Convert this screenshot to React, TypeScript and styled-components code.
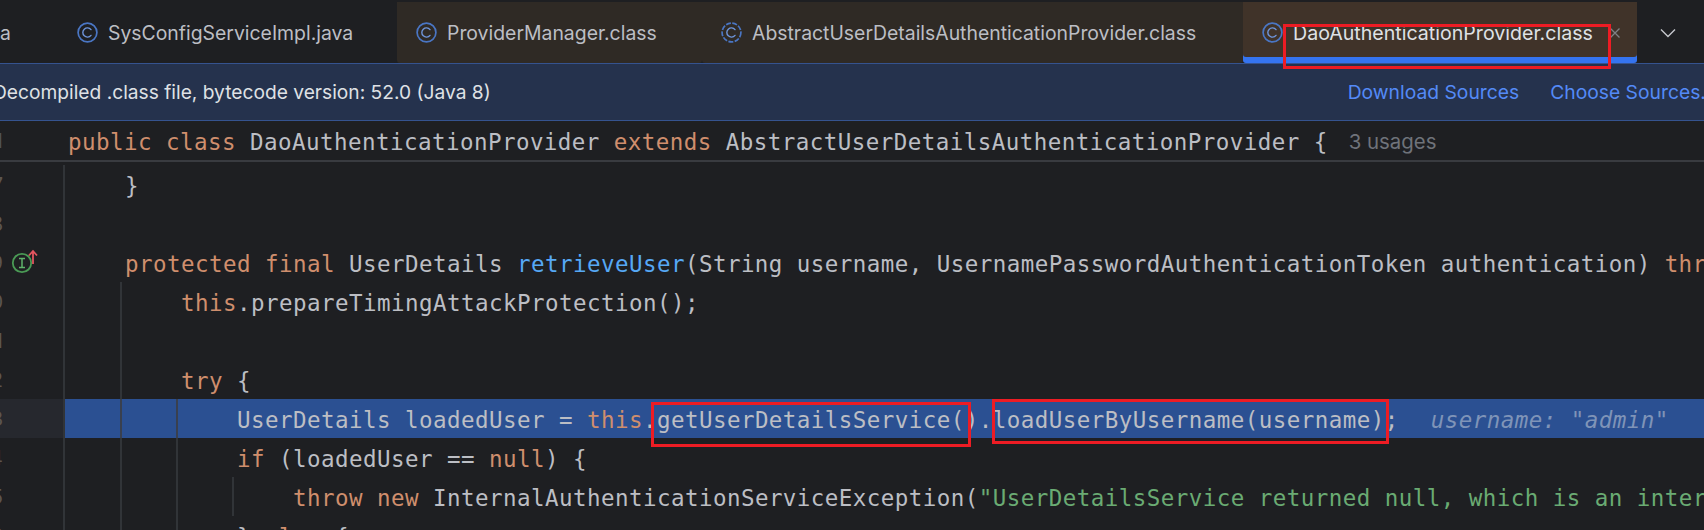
import styled, { createGlobalStyle } from "styled-components";

const GlobalStyle = createGlobalStyle`
  html, body {
    margin: 0;
    padding: 0;
    background: #1e1f22;
  }
`;

const tones = {
  plain: "#bcbec4",
  keyword: "#cf8e6d",
  method: "#56a8f5",
  string: "#6aab73",
  hint: "#7f94b8",
};

type Tone = keyof typeof tones;

function ClassIcon({ dashed }: { dashed?: boolean }) {
  return (
    <TabIcon viewBox="0 0 21 21" fill="none">
      <circle cx="10.5" cy="10.5" r="9.4" stroke="#4a76c4" strokeWidth="1.7" strokeDasharray={dashed ? "5 1.4" : undefined} />
      <path d="M14 7.6a4.6 4.6 0 1 0 0 5.8" stroke="#6f96dc" strokeWidth="1.4" strokeLinecap="round" />
    </TabIcon>
  );
}

function ImplementsIcon() {
  return (
    <GutterIcon viewBox="0 0 32 28" fill="none">
      <circle cx="11" cy="14" r="9.2" stroke="#4a9a55" strokeWidth="1.8" />
      <path d="M8 9.5h6M8 18.5h6M11 9.5v9" stroke="#5fb36b" strokeWidth="1.5" />
      <path d="M22 15V2M18 6.5 22 2l4 4.5" stroke="#e2555f" strokeWidth="1.8" />
    </GutterIcon>
  );
}

function Tab(props: { name: string; width: number; kind?: "plain" | "open" | "active"; dashed?: boolean }) {
  const { name, width, kind = "plain", dashed } = props;
  return (
    <TabBox $width={width} $kind={kind}>
      <ClassIcon dashed={dashed} />
      <TabName $active={kind === "active"}>{name}</TabName>
      {kind === "active" && (
        <CloseIcon viewBox="0 0 12 12" fill="none">
          <path d="M1.5 1.5l9 9M10.5 1.5l-9 9" stroke="#7f8086" strokeWidth="1.3" />
        </CloseIcon>
      )}
    </TabBox>
  );
}

interface LineProps {
  no: string;
  guides?: boolean[];
  current?: boolean;
  icon?: boolean;
  parts?: [string, Tone, boolean?][];
}

function Line({ no, guides = [], current, icon, parts = [] }: LineProps) {
  return (
    <LineRow>
      <Gutter $current={current}>
        <LineNo>{no}</LineNo>
        {icon && <ImplementsIcon />}
      </Gutter>
      <LineBody $current={current}>
        {guides.map((shown, i) => (
          <Indent key={i} $shown={shown} $current={current} />
        ))}
        {parts.map(([text, tone, italic], i) => (
          <Token key={i} $tone={tone} $italic={italic}>
            {text}
          </Token>
        ))}
      </LineBody>
    </LineRow>
  );
}

export default function App() {
  return (
    <Page>
      <GlobalStyle />
      <TabBar>
        <ClippedTab>a</ClippedTab>
        <Tab name="SysConfigServiceImpl.java" width={339} />
        <Tab name="ProviderManager.class" width={305} kind="open" />
        <Tab name="AbstractUserDetailsAuthenticationProvider.class" width={541} kind="open" dashed />
        <Tab name="DaoAuthenticationProvider.class" width={394} kind="active" />
        <MoreButton>
          <svg width="16" height="10" viewBox="0 0 16 10" fill="none">
            <path d="M1 1.5l7 7 7-7" stroke="#c5c7cc" strokeWidth="1.4" />
          </svg>
        </MoreButton>
      </TabBar>

      <Banner>
        <BannerText>Decompiled .class file, bytecode version: 52.0 (Java 8)</BannerText>
        <BannerLinks>
          <BannerLink>Download Sources</BannerLink>
          <BannerLink>Choose Sources...</BannerLink>
        </BannerLinks>
      </Banner>

      <StickyLine>
        <LineNo>1</LineNo>
        <StickyCode>
          <Token $tone="keyword">public class </Token>
          <Token $tone="plain">DaoAuthenticationProvider </Token>
          <Token $tone="keyword">extends </Token>
          <Token $tone="plain">AbstractUserDetailsAuthenticationProvider {"{"}</Token>
        </StickyCode>
        <Usages>3 usages</Usages>
      </StickyLine>

      <Editor>
        <Line no="7" guides={[false]} parts={[["}", "plain"]]} />
        <Line no="8" />
        <Line
          no="9"
          icon
          guides={[false]}
          parts={[
            ["protected final ", "keyword"],
            ["UserDetails ", "plain"],
            ["retrieveUser", "method"],
            ["(String username, UsernamePasswordAuthenticationToken authentication) ", "plain"],
            ["throws", "keyword"],
          ]}
        />
        <Line
          no="0"
          guides={[true, false]}
          parts={[
            ["this", "keyword"],
            [".prepareTimingAttackProtection();", "plain"],
          ]}
        />
        <Line no="1" guides={[true]} />
        <Line no="2" guides={[true, false]} parts={[["try ", "keyword"], ["{", "plain"]]} />
        <Line
          no="3"
          current
          guides={[true, true, false]}
          parts={[
            ["UserDetails loadedUser = ", "plain"],
            ["this", "keyword"],
            [".getUserDetailsService().loadUserByUsername(username);", "plain"],
            ["  username: \"admin\"", "hint", true],
          ]}
        />
        <Line
          no="4"
          guides={[true, true, false]}
          parts={[
            ["if ", "keyword"],
            ["(loadedUser == ", "plain"],
            ["null", "keyword"],
            [") {", "plain"],
          ]}
        />
        <Line
          no="5"
          guides={[true, true, true, false]}
          parts={[
            ["throw new ", "keyword"],
            ["InternalAuthenticationServiceException(", "plain"],
            ["\"UserDetailsService returned null, which is an internal", "string"],
          ]}
        />
        <Line
          no="6"
          guides={[true, true, false]}
          parts={[
            ["} ", "plain"],
            ["else ", "keyword"],
            ["{", "plain"],
          ]}
        />
      </Editor>

      <Callout $left={1283} $top={24} $width={328} $height={45} />
      <Callout $left={651} $top={402} $width={320} $height={45} />
      <Callout $left={992} $top={399} $width={397} $height={45} />
    </Page>
  );
}

const Page = styled.div`
  position: relative;
  width: 1704px;
  height: 530px;
  overflow: hidden;
  background: #1e1f22;
  font-family: Inter, "Noto Sans", sans-serif;
`;

const TabBar = styled.div`
  display: flex;
  height: 61px;
  padding-top: 2px;
  background: #1e1f22;
`;

const TabBox = styled.div<{ $width: number; $kind: string }>`
  flex: 0 0 ${({ $width }) => $width}px;
  box-sizing: border-box;
  display: flex;
  align-items: center;
  gap: 10px;
  padding: 0 16px 0 19px;
  background: ${({ $kind }) =>
    $kind === "active" ? "#403329" : $kind === "open" ? "#2f2a25" : "#1e1f22"};
  box-shadow: ${({ $kind }) => ($kind === "active" ? "inset 0 -6px 0 #3574f0" : "none")};
  border-radius: 0 0 3px 3px;
`;

const ClippedTab = styled.div`
  flex: 0 0 58px;
  box-sizing: border-box;
  padding: 19px 0 0 0;
  color: #bcbec4;
  font-size: 19.4px;
  line-height: 24px;
`;

const TabIcon = styled.svg`
  flex: none;
  width: 21px;
  height: 21px;
`;

const TabName = styled.span<{ $active?: boolean }>`
  color: ${({ $active }) => ($active ? "#dfe1e5" : "#bcbec4")};
  font-size: ${({ $active }) => ($active ? "19.6px" : "19.4px")};
  white-space: nowrap;
`;

const CloseIcon = styled.svg`
  flex: none;
  width: 12px;
  height: 12px;
  margin-left: auto;
`;

const MoreButton = styled.div`
  flex: 1;
  display: flex;
  align-items: center;
  justify-content: center;
  padding-right: 6px;
`;

const Banner = styled.div`
  box-sizing: border-box;
  display: flex;
  align-items: center;
  justify-content: space-between;
  height: 58px;
  background: #25324d;
  border-top: 1px solid #35538f;
  border-bottom: 1px solid #35538f;
`;

const BannerText = styled.span`
  margin-left: -7px;
  color: #dfe1e5;
  font-size: 19.2px;
  white-space: nowrap;
`;

const BannerLinks = styled.div`
  display: flex;
  gap: 31px;
  margin-right: -13px;
`;

const BannerLink = styled.span`
  color: #548af7;
  font-size: 19.3px;
  white-space: nowrap;
`;

const code = `
  font-family: "DejaVu Sans Mono", "Liberation Mono", monospace;
  font-size: 22.5px;
  letter-spacing: 0.45px;
  white-space: pre;
`;

const StickyLine = styled.div`
  box-sizing: border-box;
  display: flex;
  align-items: center;
  height: 41px;
  border-bottom: 2px solid #393b40;
  color: #4e5157;
  font-size: 20px;
`;

const StickyCode = styled.code`
  ${code}
  margin-left: 65px;
  padding-top: 2px;
`;

const Usages = styled.span`
  margin-left: 21px;
  padding-top: 2px;
  color: #6f737a;
  font-size: 20.4px;
`;

const Editor = styled.div`
  padding-top: 3px;
`;

const LineRow = styled.div`
  display: flex;
  height: 39px;
`;

const Gutter = styled.div<{ $current?: boolean }>`
  flex: 0 0 65px;
  box-sizing: border-box;
  display: flex;
  align-items: center;
  background: ${({ $current }) => ($current ? "#26282e" : "transparent")};
  border-right: 2px solid #313438;
  color: #5c5550;
  font-size: 20px;
`;

const LineNo = styled.span`
  flex: 0 0 3px;
  display: flex;
  justify-content: flex-end;
  overflow: hidden;
`;

const GutterIcon = styled.svg`
  flex: none;
  width: 32px;
  height: 28px;
  margin: 0 0 0 8px;
`;

const LineBody = styled.div<{ $current?: boolean }>`
  ${code}
  flex: 1;
  min-width: 0;
  box-sizing: border-box;
  display: flex;
  align-items: center;
  padding: 3px 0 0 4px;
  overflow: hidden;
  background: ${({ $current }) => ($current ? "#2b5092" : "transparent")};
`;

const Indent = styled.span<{ $shown: boolean; $current?: boolean }>`
  flex: none;
  align-self: stretch;
  width: 51px;
  margin: -3px 3px 0 0;
  border-right: 2px solid
    ${({ $shown, $current }) => (!$shown ? "transparent" : $current ? "#39404f" : "#313438")};
`;

const Token = styled.span<{ $tone: Tone; $italic?: boolean }>`
  color: ${({ $tone }) => tones[$tone]};
  font-style: ${({ $italic }) => ($italic ? "italic" : "normal")};
  margin-left: ${({ $italic }) => ($italic ? "4px" : "0")};
`;

const Callout = styled.div<{ $left: number; $top: number; $width: number; $height: number }>`
  position: absolute;
  left: ${({ $left }) => $left}px;
  top: ${({ $top }) => $top}px;
  width: ${({ $width }) => $width}px;
  height: ${({ $height }) => $height}px;
  box-sizing: border-box;
  border: 3px solid #ed1c24;
`;
